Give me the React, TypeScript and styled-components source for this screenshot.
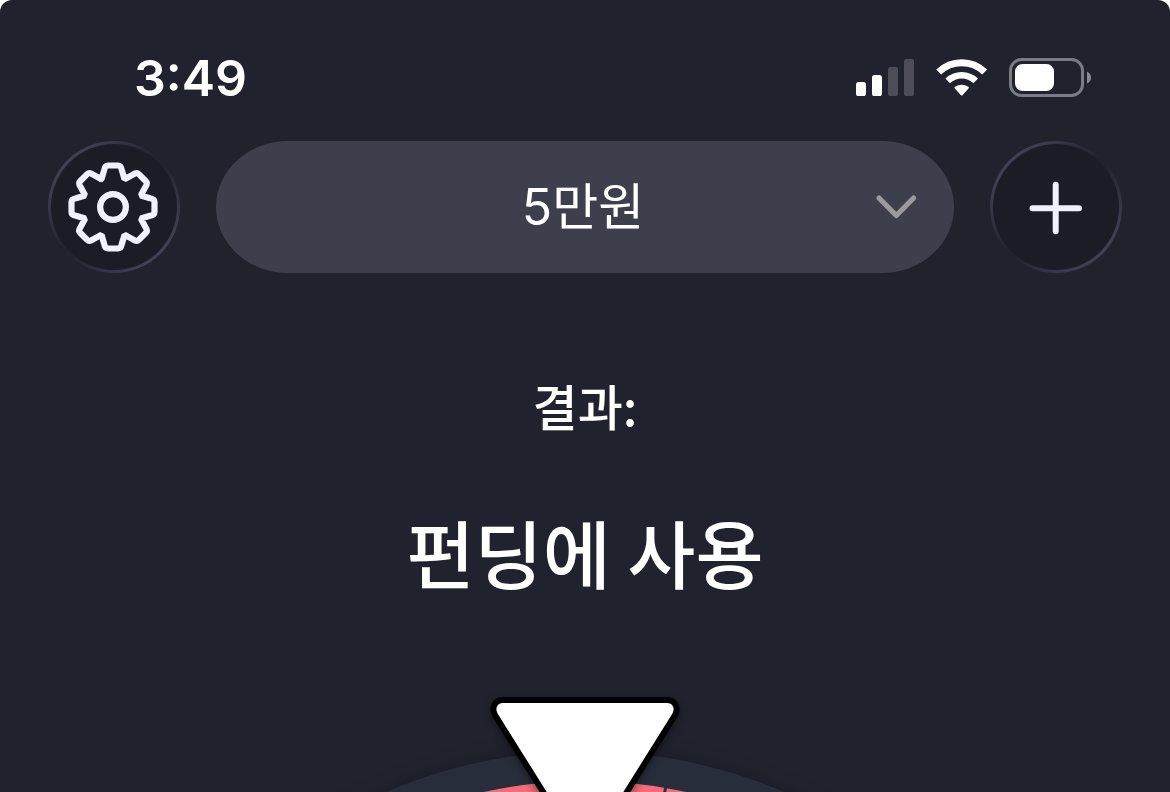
import React from "react";
import styled, { createGlobalStyle } from "styled-components";

const GlobalStyle = createGlobalStyle`
  * { box-sizing: border-box; }
  body {
    margin: 0;
    background: #ffffff;
    font-family: Inter, "Noto Sans CJK KR", sans-serif;
    color: #ffffff;
  }
`;

const Page = styled.div`
  min-height: 100vh;
  display: flex;
  flex-direction: column;
  overflow: hidden;
  background: #20222e;
  border-radius: 12px 12px 0 0;
`;

const StatusBar = styled.div`
  display: flex;
  align-items: center;
  justify-content: space-between;
  padding: 48px 78px 0 134px;
`;

const Time = styled.time`
  font-size: 50px;
  line-height: 60px;
  font-weight: 600;
`;

const StatusIcons = styled.div`
  display: flex;
  align-items: center;
  gap: 21px;

  svg { display: block; }
`;

const Toolbar = styled.header`
  display: flex;
  align-items: center;
  gap: 36px;
  padding: 33px 48px 0;
`;

const RoundButton = styled.button`
  flex: none;
  display: grid;
  place-items: center;
  width: 132px;
  height: 132px;
  padding: 0;
  border: 3px solid transparent;
  border-radius: 50%;
  background:
    linear-gradient(#1a1d25, #1a1d25) padding-box,
    linear-gradient(135deg, #434759 10%, #20222d 48%, #20222d 52%, #434759 90%) border-box;
  cursor: pointer;

  svg { display: block; }
`;

const Picker = styled.label`
  flex: 1;
  display: grid;
  align-items: center;
  min-width: 0;

  > * { grid-area: 1 / 1; }
  svg {
    justify-self: end;
    margin-right: 36px;
    pointer-events: none;
  }
`;

const PickerSelect = styled.select`
  appearance: none;
  width: 100%;
  height: 132px;
  padding: 0 48px 0 44px;
  border: 0;
  border-radius: 72px / 66px;
  background: #3e3f4d;
  color: #ffffff;
  font-family: inherit;
  font-size: 50px;
  text-align: center;
  text-align-last: center;
`;

const Result = styled.main`
  display: flex;
  flex-direction: column;
  align-items: center;
  gap: 62px;
  padding-top: 96px;
  text-align: center;
`;

const ResultLabel = styled.p`
  margin: 0;
  font-family: "Noto Sans CJK KR", sans-serif;
  font-size: 49px;
  line-height: 72px;
  font-weight: 500;
`;

const ResultValue = styled.h1`
  margin: 0;
  font-family: "Noto Sans CJK KR", sans-serif;
  font-size: 74px;
  line-height: 96px;
  font-weight: 500;
`;

const Stage = styled.section`
  flex: 1;
  margin-top: 63px;

  svg {
    display: block;
    width: 100%;
    height: 130px;
  }
`;

const TOOTH = [
  "L -8.8 -37",
  "Q -8 -41.5 -5 -41.5",
  "L 5 -41.5",
  "Q 8 -41.5 8.8 -37",
  "L 11.5 -27.8",
];

function rotateCommand(command: string, degrees: number) {
  const [op, ...rest] = command.split(" ");
  const n = rest.map(Number);
  const a = (degrees * Math.PI) / 180;
  const out: string[] = [];
  for (let i = 0; i < n.length; i += 2) {
    out.push((n[i] * Math.cos(a) - n[i + 1] * Math.sin(a)).toFixed(2));
    out.push((n[i] * Math.sin(a) + n[i + 1] * Math.cos(a)).toFixed(2));
  }
  return `${op} ${out.join(" ")}`;
}

const gearPath =
  "M -11.5 -27.8 " +
  Array.from({ length: 8 }, (_, i) => TOOTH.map((c) => rotateCommand(c, i * 45)).join(" ")).join(" ") +
  " Z";

const GearIcon = () => (
  <svg width="92" height="92" viewBox="-45 -46 92 92" fill="none" stroke="#eff2fd" strokeWidth="6.2" aria-hidden="true">
    <path d={gearPath} strokeLinejoin="bevel" />
    <circle r="12.9" />
  </svg>
);

const PlusIcon = () => (
  <svg width="56" height="56" viewBox="0 0 56 56" stroke="#eff2fd" strokeWidth="6" strokeLinecap="round" aria-hidden="true">
    <path d="M27.7 5.8V52.2M4.5 29.3H51" />
  </svg>
);

const ChevronIcon = () => (
  <svg width="44" height="28" viewBox="0 0 44 28" fill="none" stroke="#9b9b9f" strokeWidth="5.2" strokeLinecap="round" strokeLinejoin="round" aria-hidden="true">
    <path d="M5 5L22.3 22.5L39.6 5" />
  </svg>
);

const SignalIcon = () => (
  <svg width="59" height="38" viewBox="0 0 59 38" fill="#ffffff" role="img" aria-label="Signal">
    <rect x="0" y="23" width="10" height="14" rx="2.6" />
    <rect x="16" y="16" width="10" height="21" rx="2.6" />
    <rect x="32" y="8" width="10" height="29" rx="2.6" fill="#4c4d57" />
    <rect x="48" y="0" width="10" height="37" rx="2.6" fill="#4c4d57" />
  </svg>
);

const WifiIcon = () => (
  <svg width="52" height="38" viewBox="0 0 52 38" fill="none" stroke="#ffffff" role="img" aria-label="Wi-Fi">
    <path d="M2.7 13A33 33 0 0 1 48.7 13" strokeWidth="7" />
    <path d="M11.7 21.8A20.3 20.3 0 0 1 39.7 21.8" strokeWidth="6.6" />
    <path d="M18.9 29.4Q17.9 28.4 19 27.7Q25.7 23.6 32.4 27.7Q33.5 28.4 32.5 29.4L26.5 36.2Q25.7 37 24.9 36.2Z" fill="#ffffff" stroke="none" />
  </svg>
);

const BatteryIcon = () => (
  <svg width="83" height="40" viewBox="0 0 83 40" role="img" aria-label="Battery">
    <rect x="1.5" y="1.5" width="72" height="36" rx="11" fill="none" stroke="#7a7b84" strokeWidth="3" />
    <rect x="6" y="6" width="39" height="27" rx="7.5" fill="#ffffff" />
    <path d="M78 13.5Q82 15.5 82 19.5Q82 23.5 78 25.5Z" fill="#8a8b92" />
  </svg>
);

const Wheel = () => (
  <svg viewBox="0 0 1170 130" preserveAspectRatio="xMidYMin slice" role="img" aria-label="Wheel">
    <defs>
      <filter id="soft" x="-20%" y="-20%" width="140%" height="140%" colorInterpolationFilters="sRGB">
        <feDropShadow dx="0" dy="0" stdDeviation="10" floodColor="#000000" floodOpacity="0.2" />
      </filter>
      <filter id="pointerShadow" x="-20%" y="-20%" width="140%" height="140%" colorInterpolationFilters="sRGB">
        <feDropShadow dx="0" dy="3" stdDeviation="4" floodColor="#000000" floodOpacity="0.4" />
      </filter>
    </defs>
    <circle cx="585" cy="594" r="505" fill="#272d3b" filter="url(#soft)" />
    <circle cx="585" cy="594" r="475" fill="#f46c78" />
    <path d="M585 594L666.5 120" stroke="#272d3b" strokeWidth="3" />
    <path
      d="M503 38H667C675 38 679 46 675 53L585 197L495 53C491 46 495 38 503 38Z"
      fill="#ffffff"
      stroke="#000000"
      strokeWidth="6"
      filter="url(#pointerShadow)"
    />
  </svg>
);

export default function App() {
  return (
    <>
      <GlobalStyle />
      <Page>
        <StatusBar>
          <Time>3:49</Time>
          <StatusIcons>
            <SignalIcon />
            <WifiIcon />
            <BatteryIcon />
          </StatusIcons>
        </StatusBar>
        <Toolbar>
          <RoundButton type="button" aria-label="설정">
            <GearIcon />
          </RoundButton>
          <Picker>
            <PickerSelect aria-label="룰렛" defaultValue="5만원">
              <option>5만원</option>
            </PickerSelect>
            <ChevronIcon />
          </Picker>
          <RoundButton type="button" aria-label="추가">
            <PlusIcon />
          </RoundButton>
        </Toolbar>
        <Result>
          <ResultLabel>결과:</ResultLabel>
          <ResultValue>펀딩에 사용</ResultValue>
        </Result>
        <Stage>
          <Wheel />
        </Stage>
      </Page>
    </>
  );
}
